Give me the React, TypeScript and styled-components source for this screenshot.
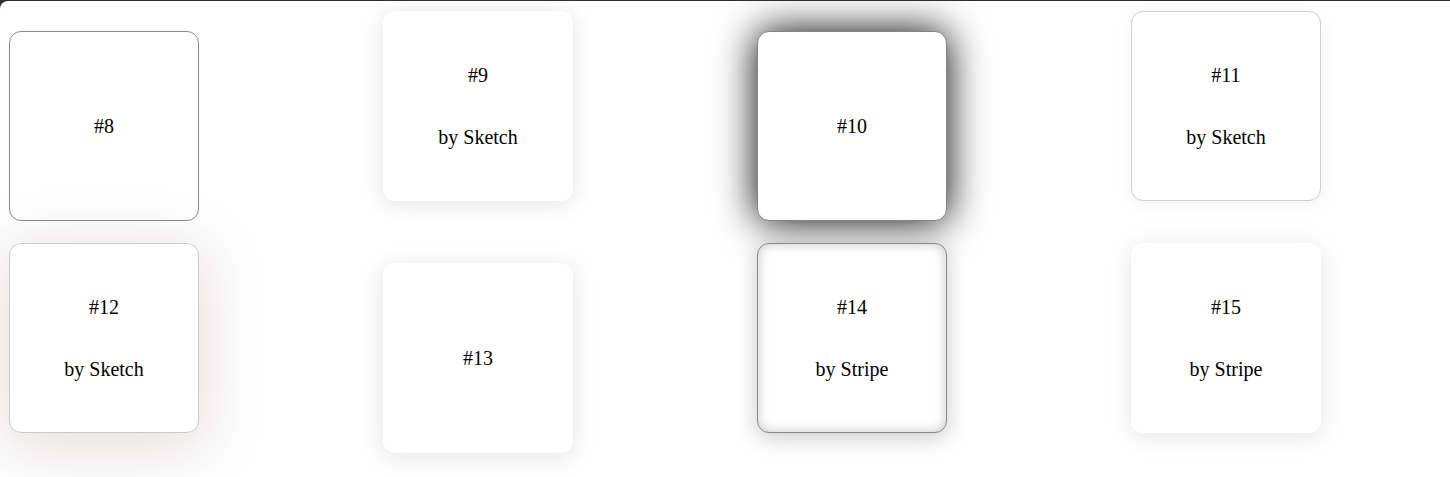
import React from "react";
import styled, { createGlobalStyle } from "styled-components";

const Global = createGlobalStyle`
  html { background: #2e2e2e; }
  body {
    margin: 0;
    font-family: "Liberation Serif", "Times New Roman", serif;
    color: #000;
  }
`;

const Window = styled.div`
  margin-top: 1px;
  min-height: calc(100vh - 1px);
  background: #fff;
  border-top-left-radius: 8px;
  overflow: hidden;
`;

const Grid = styled.div`
  display: grid;
  grid-template-columns: repeat(4, 190px);
  grid-auto-rows: 190px;
  column-gap: 184px;
  row-gap: 42px;
  padding: 10px 0 0 9px;
  align-items: start;
`;

const Card = styled.div<{ $shadow: string; $border: string; $drop?: boolean }>`
  box-sizing: border-box;
  width: 190px;
  height: 190px;
  margin-top: ${(p) => (p.$drop ? "20px" : "0")};
  border-radius: 12px;
  background: #fff;
  border: ${(p) => p.$border};
  box-shadow: ${(p) => p.$shadow};
  display: flex;
  flex-direction: column;
  align-items: center;
  justify-content: center;
  gap: 39px;
  font-size: 20px;
  line-height: 23px;
`;

const Line = styled.span`
  display: block;
  text-align: center;
`;

type Item = { n: number; by?: string; shadow: string; border: string };

const items: Item[] = [
  { n: 8, shadow: "none", border: "1px solid #8a8a8a" },
  { n: 9, by: "Sketch", shadow: "rgba(0,0,0,0.11) 0px 3px 22px", border: "none" },
  { n: 10, shadow: "rgba(0,0,0,1) 0px 0px 40px", border: "1px solid #858585" },
  { n: 11, by: "Sketch", shadow: "rgba(0,0,0,0.05) 0px 4px 20px", border: "1px solid #cfcfcf" },
  {
    n: 12,
    by: "Sketch",
    shadow: "rgba(100,70,60,0.16) 0px 10px 60px 8px",
    border: "1px solid #cdc9c8",
  },
  { n: 13, shadow: "rgba(0,0,0,0.11) 0px 4px 26px", border: "none" },
  {
    n: 14,
    by: "Stripe",
    shadow: "inset 0px 0px 12px rgba(0,0,0,0.22), rgba(0,0,0,0.22) 0px 4px 22px",
    border: "1px solid #888",
  },
  { n: 15, by: "Stripe", shadow: "rgba(0,0,0,0.1) 0px 4px 24px", border: "none" },
];

export default function App() {
  return (
    <>
      <Global />
      <Window>
        <Grid>
          {items.map((it) => (
            <Card key={it.n} $shadow={it.shadow} $border={it.border} $drop={!it.by}>
              <Line>#{it.n}</Line>
              {it.by && <Line>by {it.by}</Line>}
            </Card>
          ))}
        </Grid>
      </Window>
    </>
  );
}
